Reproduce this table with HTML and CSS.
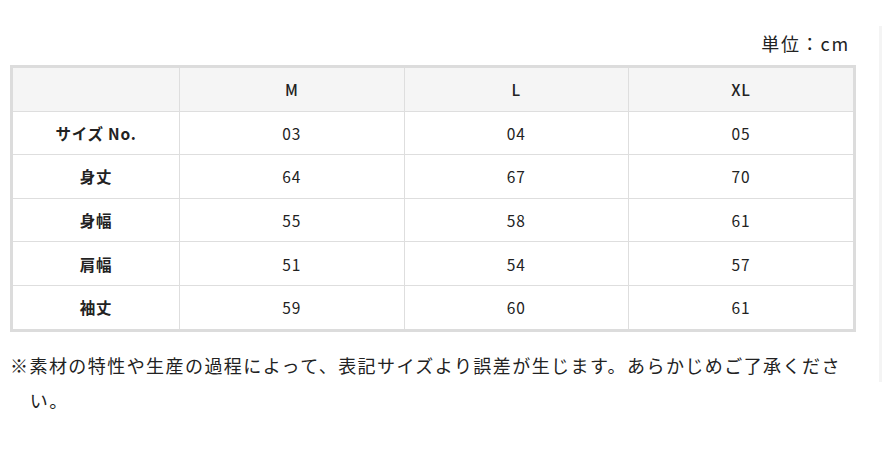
FILE: index.html
```html
<!DOCTYPE html>
<html lang="ja">
<head>
<meta charset="utf-8">
<link rel="stylesheet" href="styles.css">
</head>
<body>
<div class="page">
  <div class="content">
    <p class="unit">単位：cm</p>
    <div class="table-wrap">
      <table class="size-table">
        <thead>
          <tr><th></th><th>M</th><th>L</th><th>XL</th></tr>
        </thead>
        <tbody>
          <tr><th>サイズ No.</th><td>03</td><td>04</td><td>05</td></tr>
          <tr><th>身丈</th><td>64</td><td>67</td><td>70</td></tr>
          <tr><th>身幅</th><td>55</td><td>58</td><td>61</td></tr>
          <tr><th>肩幅</th><td>51</td><td>54</td><td>57</td></tr>
          <tr><th>袖丈</th><td>59</td><td>60</td><td>61</td></tr>
        </tbody>
      </table>
    </div>
    <p class="note">※素材の特性や生産の過程によって、表記サイズより誤差が生じます。あらかじめご了承ください。</p>
  </div>
  <div class="edge"></div>
</div>
</body>
</html>
```
FILE: styles.css
```css
html, body {
  margin: 0;
  padding: 0;
  background: #fff;
}
body {
  font-family: "Noto Sans CJK JP", "Noto Sans", sans-serif;
  color: #222;
}
.page {
  position: relative;
  width: 884px;
  height: 454px;
}
.content {
  width: 846px;
  padding: 28px 0 0 10px;
}
.unit {
  margin: 0 6px 7px 0;
  text-align: right;
  font-size: 18px;
  line-height: 30px;
  letter-spacing: 0.1em;
}
.table-wrap {
  border: 3px solid #dcdcdc;
}
.size-table {
  width: 100%;
  border-collapse: collapse;
  table-layout: fixed;
  font-size: 15.5px;
  letter-spacing: 0.05em;
}
.size-table th,
.size-table td {
  border: 1px solid #dedede;
  height: 42.6px;
  padding: 0;
  text-align: center;
  vertical-align: middle;
}
.size-table tr > :first-child { border-left: none; width: 166px; }
.size-table tr > :last-child { border-right: none; }
.size-table thead th { border-top: none; background: #f5f5f5; font-weight: 500; }
.size-table tbody tr:last-child > * { border-bottom: none; }
.size-table tbody th { font-weight: 600; }
.size-table td { font-weight: 400; }
.note {
  margin: 16px 0 0;
  padding-left: 1.1em;
  text-indent: -1.1em;
  font-size: 18px;
  line-height: 35px;
  letter-spacing: 0.08em;
}
.edge {
  position: absolute;
  left: 879px;
  top: 26px;
  width: 3px;
  height: 356px;
  background: #f4f4f4;
}
```
